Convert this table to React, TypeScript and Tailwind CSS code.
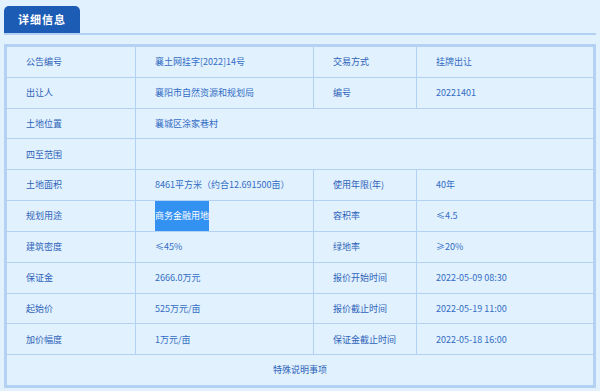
const font = { fontFamily: '"Noto Sans CJK SC", "Noto Sans", sans-serif' };

type Cell = { text?: string; span?: number; label?: boolean; mark?: boolean; center?: boolean };

const rows: Cell[][] = [
  [{ text: '公告编号', label: true }, { text: '襄土网挂字[2022]14号' }, { text: '交易方式', label: true }, { text: '挂牌出让' }],
  [{ text: '出让人', label: true }, { text: '襄阳市自然资源和规划局' }, { text: '编号', label: true }, { text: '20221401' }],
  [{ text: '土地位置', label: true }, { text: '襄城区涂家巷村', span: 3 }],
  [{ text: '四至范围', label: true }, { text: '', span: 3 }],
  [{ text: '土地面积', label: true }, { text: '8461平方米（约合12.691500亩）' }, { text: '使用年限(年)', label: true }, { text: '40年' }],
  [{ text: '规划用途', label: true }, { text: '商务金融用地', mark: true }, { text: '容积率', label: true }, { text: '≤4.5' }],
  [{ text: '建筑密度', label: true }, { text: '≤45%' }, { text: '绿地率', label: true }, { text: '≥20%' }],
  [{ text: '保证金', label: true }, { text: '2666.0万元' }, { text: '报价开始时间', label: true }, { text: '2022-05-09 08:30' }],
  [{ text: '起始价', label: true }, { text: '525万元/亩' }, { text: '报价截止时间', label: true }, { text: '2022-05-19 11:00' }],
  [{ text: '加价幅度', label: true }, { text: '1万元/亩' }, { text: '保证金截止时间', label: true }, { text: '2022-05-18 16:00' }],
  [{ text: '特殊说明事项', span: 4, center: true, label: true }],
];

export default function App() {
  return (
    <div className="w-[600px] h-[391px] bg-[#e1f1fe] overflow-hidden" style={font}>
      <div className="pt-[6px] px-[4px]">
        <div className="border-b-2 border-[#b3d2f3] flex">
          <div className="w-[76px] h-[27px] bg-[#1c5cb5] rounded-t-[5px] flex items-center justify-center text-white text-[11px] font-bold tracking-[1px]">
            详细信息
          </div>
        </div>
      </div>
      <div className="mt-[9px] mx-[4px] border-2 border-[#b3d2f3]">
        <table className="w-full table-fixed border-collapse text-[9px]">
          <colgroup>
            <col className="w-[129px]" />
            <col className="w-[178px]" />
            <col className="w-[103px]" />
            <col />
          </colgroup>
          <tbody>
            {rows.map((r, i) => (
              <tr key={i} className="h-[30.8px]">
                {r.map((c, j) => (
                  <td
                    key={j}
                    colSpan={c.span}
                    className={
                      'border border-[#b3d2f3] p-0 align-middle ' +
                      (c.center ? 'text-center ' : 'pl-[19px] ') +
                      (c.label ? 'text-[#2f63b9]' : 'text-[#336dc4]')
                    }
                  >
                    {c.mark ? (
                      <span className="inline-flex items-center h-[30px] bg-[#3391f2] text-white">{c.text}</span>
                    ) : (
                      c.text
                    )}
                  </td>
                ))}
              </tr>
            ))}
          </tbody>
        </table>
      </div>
    </div>
  );
}
